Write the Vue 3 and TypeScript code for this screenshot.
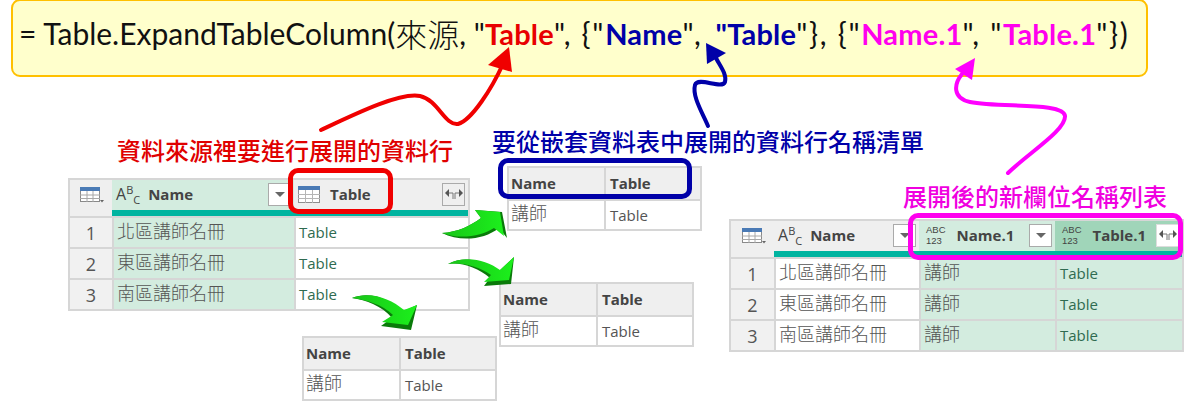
<script setup lang="ts">
interface MiniTable { key: string; cell: string }
const miniTables: MiniTable[] = [
  { key: 'one', cell: '講師' },
  { key: 'two', cell: '講師' },
  { key: 'three', cell: '講師' },
]
const regions = ['北區講師名冊', '東區講師名冊', '南區講師名冊']
</script>

<template>
  <div class="canvas">
    <div class="formula">
      <span>= Table.ExpandTableColumn(</span><span class="cjk">來源</span><span>, "</span><b class="red">Table</b><span class="p">", {"</span><b class="blue">Name</b><span class="p wide">", </span><b class="blue">"Table</b><span class="p">"}, {"</span><b class="pink">Name.1</b><span class="p">", "</span><b class="pink">Table.1</b><span class="p">"})</span>
    </div>

    <div class="label label-red">資料來源裡要進行展開的資料行</div>
    <div class="label label-blue">要從嵌套資料表中展開的資料行名稱清單</div>
    <div class="label label-pink">展開後的新欄位名稱列表</div>

    <div class="table main-table">
      <div class="head num">
        <svg width="24" height="17" viewBox="0 0 24 17"><rect x="0.5" y="0.5" width="19" height="14" fill="#fff" stroke="#8a8a8a"/><rect x="0" y="0" width="20" height="4" fill="#4a7ab5"/><path d="M0 8h20M0 11.5h20M7 4v11M13 4v11" stroke="#a8a8a8" fill="none"/><path d="M20 13h4l-2 2.5z" fill="#666"/></svg>
      </div>
      <div class="head tint">
        <span class="type-abc">A<sup>B</sup><sub>C</sub></span><span class="title">Name</span>
        <span class="btn"><i class="tri"></i></span>
      </div>
      <div class="head plain">
        <svg class="tbl-icon" width="22" height="17" viewBox="0 0 22 17"><rect x="0.5" y="0.5" width="21" height="16" fill="#fff" stroke="#8f8f8f"/><rect x="0" y="0" width="22" height="4" fill="#4a7ab5"/><path d="M0 8.5h22M0 12.5h22M7.5 4v13M14.5 4v13" stroke="#b5b5b5" fill="none"/></svg>
        <span class="title">Table</span>
        <span class="btn expand">
          <svg width="20" height="14" viewBox="0 0 20 14"><path d="M1 6l4-4v8zM19 6l-4-4v8z" fill="#555"/><path d="M5 6h4v6M15 6h-4v6" stroke="#777" fill="none"/></svg>
        </span>
      </div>
      <div class="bar-gap"></div>
      <div class="bar"></div>
      <template v-for="(region, i) in regions" :key="region">
        <div class="cell num-cell">{{ i + 1 }}</div>
        <div class="cell cjk-cell tint">{{ region }}</div>
        <div class="cell link-cell">Table</div>
      </template>
    </div>

    <div v-for="t in miniTables" :key="t.key" class="table mini" :class="'mini-' + t.key">
      <div class="head mini-head"><span class="title">Name</span></div>
      <div class="head mini-head"><span class="title">Table</span></div>
      <div class="cell cjk-cell mini-cjk">{{ t.cell }}</div>
      <div class="cell mini-link">Table</div>
    </div>

    <div class="table right-table">
      <div class="head num">
        <svg width="24" height="17" viewBox="0 0 24 17"><rect x="0.5" y="0.5" width="19" height="14" fill="#fff" stroke="#8a8a8a"/><rect x="0" y="0" width="20" height="4" fill="#4a7ab5"/><path d="M0 8h20M0 11.5h20M7 4v11M13 4v11" stroke="#a8a8a8" fill="none"/><path d="M20 13h4l-2 2.5z" fill="#666"/></svg>
      </div>
      <div class="head plain">
        <span class="type-abc">A<sup>B</sup><sub>C</sub></span><span class="title">Name</span>
        <span class="btn"><i class="tri"></i></span>
      </div>
      <div class="head tint">
        <span class="type-123"><span>ABC</span><span>123</span></span><span class="title">Name.1</span>
        <span class="btn"><i class="tri"></i></span>
      </div>
      <div class="head deep">
        <span class="type-123"><span>ABC</span><span>123</span></span><span class="title">Table.1</span>
        <span class="btn expand white">
          <svg width="20" height="14" viewBox="0 0 20 14"><path d="M1 6l4-4v8zM19 6l-4-4v8z" fill="#555"/><path d="M5 6h4v6M15 6h-4v6" stroke="#777" fill="none"/></svg>
        </span>
      </div>
      <div class="bar-gap"></div>
      <div class="bar"></div>
      <template v-for="(region, i) in regions" :key="'r' + region">
        <div class="cell num-cell">{{ i + 1 }}</div>
        <div class="cell cjk-cell">{{ region }}</div>
        <div class="cell cjk-cell tint">講師</div>
        <div class="cell link-cell tint">Table</div>
      </template>
    </div>

    <div class="ring ring-red"></div>
    <div class="ring ring-blue"></div>
    <div class="ring ring-pink"></div>

    <svg class="overlay" width="1188" height="402" viewBox="0 0 1188 402">
      <defs>
        <linearGradient id="g1" x1="0" y1="0" x2="1" y2="0"><stop offset="0" stop-color="#18c418"/><stop offset="1" stop-color="#1cf01c"/></linearGradient>
      </defs>
      <!-- red -->
      <path d="M321 130C355 114 400 92 420 96C438 100 445 126 458 124C472 120 492 88 503 64" fill="none" stroke="#f00000" stroke-width="4" stroke-linecap="round"/>
      <path d="M509 47L488 65L512 72Z" fill="#f00000"/>
      <!-- blue -->
      <path d="M708 126C702 112 692 96 695 85C698 76 722 90 725 82C727 74 720 66 716 58" fill="none" stroke="#0000a8" stroke-width="4" stroke-linecap="round"/>
      <path d="M706 43L707 64L726 53Z" fill="#0000a8"/>
      <!-- magenta -->
      <path d="M1008 173C1030 152 1066 130 1065 116C1064 102 1000 108 970 102C952 98 954 84 962 74" fill="none" stroke="#ff00ff" stroke-width="4" stroke-linecap="round"/>
      <path d="M975 58L955 69L972 80Z" fill="#ff00ff"/>
      <!-- green 1 -->
      <path d="M442 233C458 232 470 226 481 218L475 210L502 212L507 238L499 228C484 240 460 242 442 233Z" fill="#0a7a0a"/>
      <path d="M442 233C458 232 470 226 481 218L475 210L500 212L504 236L494 228C482 236 460 240 442 233Z" fill="url(#g1)"/>
      <!-- green 2 -->
      <path d="M448 264C466 254 486 262 498 272L514 257L511 284L484 286L490 278C478 268 462 262 448 264Z" fill="#0a7a0a"/>
      <path d="M448 264C466 255 486 260 500 270L514 257L509 280L484 282L491 275C478 266 462 262 448 264Z" fill="url(#g1)"/>
      <!-- green 3 -->
      <path d="M352 298C370 290 392 300 402 312L417 305L411 330L381 326L392 318C382 306 366 300 352 298Z" fill="#0a7a0a"/>
      <path d="M352 298C370 291 390 298 404 310L417 305L408 325L382 322L393 315C382 304 366 300 352 298Z" fill="url(#g1)"/>
    </svg>
  </div>
</template>

<style>
html, body { margin: 0; background: #fff; }
</style>

<style scoped>
.canvas {
  position: relative;
  width: 1188px;
  height: 402px;
  overflow: hidden;
  background: #fff;
  font-family: "Open Sans", "Noto Sans CJK TC", sans-serif;
}
.formula {
  position: absolute;
  left: 11px;
  top: -1px;
  width: 1127px;
  height: 64px;
  border: 2px solid #ffc000;
  border-radius: 9px;
  background: #ffffcc;
  display: flex;
  align-items: center;
  padding: 0 0 10px 6px;
  font-family: Lato, "Noto Sans CJK TC", sans-serif;
  font-size: 30px;
  color: #111;
  white-space: pre;
}
.formula b { font-size: 29px; letter-spacing: 0.2px; }
.p { letter-spacing: 1.7px; }
.p.wide { letter-spacing: 3.5px; }
.cjk { font-family: "Noto Sans CJK TC", sans-serif; font-weight: 300; font-size: 32px; line-height: 40px; }
.red { color: #e80000; }
.blue { color: #0000a8; }
.pink { color: #ff00ee; }
.label {
  position: absolute;
  font-family: "Noto Sans CJK TC", sans-serif;
  font-size: 24px;
  line-height: 28px;
  font-weight: 500;
  white-space: nowrap;
}
.label-red { left: 117px; top: 136px; color: #e00000; }
.label-blue { left: 492px; top: 127px; color: #0000a8; }
.label-pink { left: 903px; top: 182px; color: #f000e0; }
.table {
  position: absolute;
  display: grid;
  box-sizing: border-box;
  background: #efefef;
  border: 2px solid #d6d6d6;
  color: #444;
}
.main-table {
  left: 68px;
  top: 178px;
  width: 402px;
  height: 133px;
  grid-template-columns: 42px 182px 1fr;
  grid-template-rows: 30px 6px 31px 31px 1fr;
}
.right-table {
  left: 729px;
  top: 219px;
  width: 455px;
  height: 133px;
  grid-template-columns: 43px 145px 136px 1fr;
  grid-template-rows: 30px 6px 31px 31px 1fr;
}
.head {
  display: flex;
  align-items: center;
  min-width: 0;
  padding: 0 3px 2px 4px;
  box-sizing: border-box;
}
.head.num { justify-content: center; padding: 0 0 0 2px; }
.plain { background: #efefef; }
.tint { background: #d3ecdf; }
.deep { background: #a0d5b9; }
.title { font-size: 15px; font-weight: 700; color: #444; white-space: nowrap; }
.type-abc { font-size: 16px; color: #444; margin-right: 8px; white-space: nowrap; line-height: 1; }
.type-abc sup, .type-abc sub { font-size: 11px; line-height: 0; }
.type-123 {
  display: flex;
  flex-direction: column;
  font-family: "Liberation Sans", sans-serif;
  font-size: 9.5px;
  line-height: 11px;
  color: #444;
  margin: 0 11px 0 3px;
}
.tbl-icon { margin-right: 10px; }
.btn {
  margin-left: auto;
  width: 23px;
  height: 23px;
  box-sizing: border-box;
  border: 1px solid #aaa;
  background: #fff;
  display: flex;
  align-items: center;
  justify-content: center;
  flex: none;
}
.expand { background: #efefef; }
.expand.white { background: #fff; border-color: #ddd; }
.tri {
  width: 0;
  height: 0;
  border-left: 5px solid transparent;
  border-right: 5px solid transparent;
  border-top: 5px solid #666;
}
.bar-gap { background: #efefef; }
.bar { grid-column: 2 / -1; background: #00b4a0; }
.cell {
  display: flex;
  align-items: center;
  padding: 0 3px;
  box-sizing: border-box;
  border-top: 2px solid #d6d6d6;
  border-left: 2px solid #d6d6d6;
  background: #fff;
  min-width: 0;
  min-height: 0;
  overflow: hidden;
  white-space: nowrap;
}
.num-cell {
  background: #f1f1f1;
  justify-content: center;
  border-left: none;
  font-size: 18px;
  line-height: 1;
  color: #555;
}
.cell.tint { background: #d3ecdf; }
.cjk-cell {
  font-family: "Noto Sans CJK TC", sans-serif;
  font-size: 18px;
  line-height: 20px;
  font-weight: 300;
  color: #555;
  padding-bottom: 5px;
}
.link-cell {
  font-size: 15px;
  line-height: 20px;
  color: #2f6b50;
  padding-bottom: 2px;
}
.mini {
  width: 195px;
  height: 65px;
  grid-template-columns: 95px 1fr;
  grid-template-rows: 31px 1fr;
}
.mini-one { left: 507px; top: 166px; }
.mini-two { left: 499px; top: 282px; }
.mini-three { left: 302px; top: 336px; }
.mini-head { padding: 0 2px 2px; }
.mini-head + .mini-head { border-left: 2px solid #d6d6d6; padding-left: 4px; }
.mini-cjk { border-left: none; padding-left: 2px; padding-bottom: 6px; }
.mini-link { font-size: 15px; line-height: 20px; color: #555; padding-left: 4px; }
.ring {
  position: absolute;
  box-sizing: border-box;
  border-width: 5px;
  border-style: solid;
  border-radius: 10px;
}
.ring-red { left: 288px; top: 168px; width: 105px; height: 46px; border-color: #f00000; }
.ring-blue { left: 498px; top: 158px; width: 194px; height: 41px; border-color: #0000a8; }
.ring-pink { left: 908px; top: 213px; width: 275px; height: 47px; border-color: #ff00ee; }
.overlay { position: absolute; left: 0; top: 0; pointer-events: none; }
</style>
